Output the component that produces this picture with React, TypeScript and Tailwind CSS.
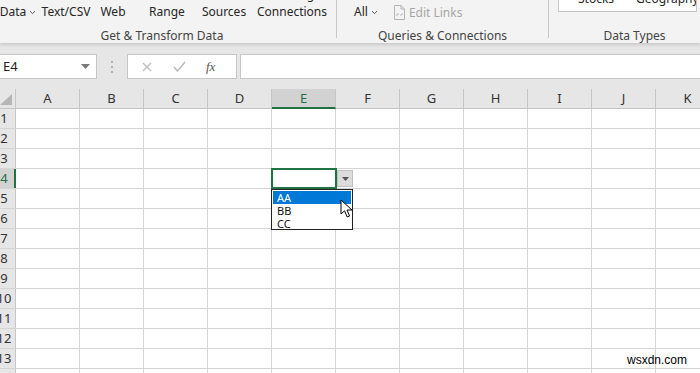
import * as React from "react";

const COLS = ["A", "B", "C", "D", "E", "F", "G", "H", "I", "J", "K"];
const ROWS = [1, 2, 3, 4, 5, 6, 7, 8, 9, 10, 11, 12, 13, 14];

const Chevron = () => (
  <svg width="7" height="5" viewBox="0 0 7 5" className="ml-[3px] mt-[1px]">
    <path d="M1 1.2 L3.5 3.6 L6 1.2" fill="none" stroke="#555" strokeWidth="1" />
  </svg>
);

interface IRibbonButtonProps {
  top: string;
  label: React.ReactNode;
  width: string;
}

const RibbonButton: React.FunctionComponent<IRibbonButtonProps> = (props) => {
  const { top, label, width } = props;
  return (
    <div className={`${width} flex flex-col items-center shrink-0 -mt-[12px]`}>
      <div className="h-[14px] leading-[14px] whitespace-nowrap mb-[3px]">{top}</div>
      <div className="h-[14px] leading-[14px] whitespace-nowrap flex items-center">{label}</div>
    </div>
  );
};

const EditLinksIcon = () => (
  <svg width="13" height="15" viewBox="0 0 13 15" className="mr-[3px]">
    <path d="M1.5 0.5 H8 L11.5 4 V14.5 H1.5 Z" fill="none" stroke="#b4b4b4" />
    <path d="M8 0.5 V4 H11.5" fill="none" stroke="#b4b4b4" />
    <path d="M4 11 C3 9.5 5 8 6 9.5 M9 8 C10 9.5 8 11 7 9.5" fill="none" stroke="#b4b4b4" />
  </svg>
);

const Cursor = () => (
  <svg width="14" height="20" viewBox="0 0 14 20">
    <path
      d="M1 1 L1 15 L4.5 11.8 L7.2 18 L9.6 17 L7 11 L12 11 Z"
      fill="#fff"
      stroke="#000"
      strokeWidth="1"
      strokeLinejoin="round"
    />
  </svg>
);

export default function App() {
  return (
    <div
      className="w-[700px] h-[373px] overflow-hidden bg-[#e6e6e6] text-[#262626] relative"
      style={{ fontFamily: "'Noto Sans', 'Open Sans', sans-serif" }}
    >
      {/* ribbon */}
      <div className="h-[43px] bg-[#f3f3f3] flex text-[12px] overflow-hidden shadow-[0_2px_3px_rgba(0,0,0,0.12)] relative z-10">
        <div className="w-[337px] shrink-0 border-r border-[#c8c8c8] flex flex-col h-[38px]">
          <div className="flex h-[29px] shrink-0">
            <RibbonButton width="w-[36px]" top="Get" label={<>Data<Chevron /></>} />
            <RibbonButton width="w-[60px]" top="From" label="Text/CSV" />
            <RibbonButton width="w-[34px]" top="From" label="Web" />
            <RibbonButton width="w-[74px]" top="From Table/" label="Range" />
            <RibbonButton width="w-[40px]" top="Recent" label="Sources" />
            <div className="w-[8px]" />
            <RibbonButton width="w-[80px]" top="Existing" label="Connections" />
          </div>
          <div className="shrink-0 text-center leading-[14px] pr-[12px] text-[#444]">Get &amp; Transform Data</div>
        </div>
        <div className="w-[212px] shrink-0 border-r border-[#c8c8c8] flex flex-col h-[38px]">
          <div className="flex h-[29px] shrink-0 items-start pt-[5px] pl-[17px]">
            <div className="flex items-center leading-[14px]">
              All
              <Chevron />
            </div>
            <div className="flex items-center leading-[14px] ml-[15px] text-[#a6a6a6]">
              <EditLinksIcon />
              Edit Links
            </div>
          </div>
          <div className="shrink-0 text-center leading-[14px] text-[#444]">Queries &amp; Connections</div>
        </div>
        <div className="flex-1 flex flex-col h-[43px]">
          <div className="h-[29px] shrink-0 pl-[9px]">
            <div className="w-[139px] h-[12px] bg-white border border-t-0 border-[#c6c6c6] flex items-end overflow-hidden">
              <div className="flex leading-[14px] mb-[5px] pl-[19px] gap-[22px]">
                <span>Stocks</span>
                <span>Geography</span>
              </div>
            </div>
          </div>
          <div className="shrink-0 text-center leading-[14px] pl-[20px] text-[#444]">Data Types</div>
        </div>
      </div>

      {/* formula bar */}
      <div className="flex items-start h-[46px] pt-[11px]">
        <div className="w-[97px] h-[25px] bg-white border border-l-0 border-[#c6c6c6] flex items-center justify-between pl-[3px] pr-[6px] shrink-0">
          <span className="text-[13px] text-[#222]">E4</span>
          <svg width="9" height="5" viewBox="0 0 9 5">
            <path d="M0 0 H9 L4.5 5 Z" fill="#7a7a7a" />
          </svg>
        </div>
        <div className="w-[30px] h-[25px] flex flex-col items-center justify-center gap-[3px] shrink-0">
          <div className="w-[2px] h-[2px] bg-[#b0b0b0]" />
          <div className="w-[2px] h-[2px] bg-[#b0b0b0]" />
          <div className="w-[2px] h-[2px] bg-[#b0b0b0]" />
        </div>
        <div className="w-[110px] h-[25px] bg-white border border-[#c6c6c6] flex items-center shrink-0">
          <svg width="10" height="10" viewBox="0 0 10 10" className="ml-[14px]">
            <path d="M1 1 L9 9 M9 1 L1 9" stroke="#bdbdbd" strokeWidth="1.3" />
          </svg>
          <svg width="13" height="11" viewBox="0 0 13 11" className="ml-[21px]">
            <path d="M1 6 L4.5 10 L12 1" fill="none" stroke="#bdbdbd" strokeWidth="1.6" />
          </svg>
          <span
            className="ml-[20px] text-[13px] italic text-[#555]"
            style={{ fontFamily: "'Liberation Serif', serif" }}
          >
            fx
          </span>
        </div>
        <div className="ml-[3px] flex-1 h-[25px] bg-white border border-r-0 border-[#c6c6c6]" />
      </div>

      {/* grid */}
      <div className="relative bg-white text-[13px] text-[#333]">
        <div className="flex h-[20px] bg-[#e6e6e6] border-b border-[#c6c6c6]">
          <div className="w-[16px] shrink-0 border-r border-[#c6c6c6] relative">
            <svg width="12" height="11" viewBox="0 0 12 11" className="absolute right-[3px] bottom-[3px]">
              <path d="M12 0 V11 H0 Z" fill="#b5b5b5" />
            </svg>
          </div>
          {COLS.map((c) => (
            <div
              key={c}
              className={
                c === "E"
                  ? "w-[64px] shrink-0 text-center leading-[18px] bg-[#d2d2d2] border-r border-[#c6c6c6] border-b-2 border-b-[#217346] text-[#217346] h-[20px]"
                  : "w-[64px] shrink-0 text-center leading-[19px] border-r border-[#c6c6c6]"
              }
            >
              {c}
            </div>
          ))}
        </div>
        {ROWS.map((r) => (
          <div key={r} className="flex h-[20px] border-b border-[#d4d4d4]">
            <div
              className={
                r === 4
                  ? "w-[16px] shrink-0 overflow-hidden bg-[#d2d2d2] border-r-2 border-[#217346] text-[#217346]"
                  : "w-[16px] shrink-0 overflow-hidden bg-[#e6e6e6] border-r border-[#c6c6c6]"
              }
            >
              <div className="w-[30px] -ml-[11px] text-center leading-[19px]">{r}</div>
            </div>
            {COLS.map((c) => (
              <div key={c} className="w-[64px] shrink-0 border-r border-[#d4d4d4]" />
            ))}
          </div>
        ))}

        {/* selection + validation list */}
        <div className="absolute left-[271px] top-[79px] w-[66px] h-[21px] border-2 border-[#217346]" />
        <div className="absolute left-[337px] top-[81px] w-[16px] h-[17px] bg-[#dcdcdc] border border-[#c0c0c0] flex items-center justify-center">
          <svg width="7" height="4" viewBox="0 0 7 4">
            <path d="M0 0 H7 L3.5 4 Z" fill="#555" />
          </svg>
        </div>
        <div className="absolute left-[271px] top-[100px] w-[82px] h-[41px] bg-white border border-[#222] text-[11px] text-[#111] p-[1px]">
          <div className="bg-[#0078d7] text-white pl-[4px] h-[13px] leading-[13px]">AA</div>
          <div className="pl-[4px] h-[13px] leading-[13px]">BB</div>
          <div className="pl-[4px] h-[13px] leading-[13px]">CC</div>
        </div>
        <div className="absolute left-[340px] top-[110px]">
          <Cursor />
        </div>
        <div
          className="absolute left-[627px] top-[264px] text-[12px] text-black leading-[14px]"
          style={{ fontFamily: "'Liberation Sans', sans-serif" }}
        >
          wsxdn.com
        </div>
      </div>
    </div>
  );
}
